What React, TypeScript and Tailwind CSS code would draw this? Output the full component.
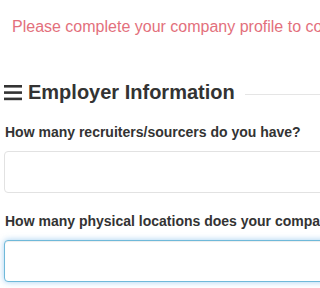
import React from "react";

export default function App() {
  return (
    <div className="w-full h-[288px] overflow-hidden bg-white" style={{ fontFamily: '"Liberation Sans", Arial, sans-serif' }}>
      <div className="w-[520px]">
        <div className="pt-[15px] pl-[12px] text-[16px] leading-[24px] text-[#e3707c] whitespace-nowrap">
          Please complete your company profile to continue.
        </div>
        <div className="mt-[39px] pl-[4px] flex items-center h-[28px]">
          <svg width="18" height="16" viewBox="0 0 18 16" className="shrink-0 mt-[1px]">
            <rect x="0" y="0" width="18" height="2.6" fill="#333" />
            <rect x="0" y="6.3" width="18" height="2.6" fill="#333" />
            <rect x="0" y="12.6" width="18" height="2.6" fill="#333" />
          </svg>
          <span className="ml-[6px] text-[20px] leading-[28px] font-bold text-[#333] whitespace-nowrap">Employer Information</span>
          <div className="flex-1 h-px bg-[#e5e5e5] ml-[10px] mt-[4px]" />
        </div>
        <div className="mt-[16px] pl-[4px] pr-0">
          <div className="pl-px text-[14px] leading-[20px] font-bold text-[#333] whitespace-nowrap">
            How many recruiters/sourcers do you have?
          </div>
          <div className="mt-[9px] h-[42px] w-[500px] rounded-[4px] border border-[#e2e2e2] bg-white" />
          <div className="mt-[18px] pl-px text-[14px] leading-[20px] font-bold text-[#333] whitespace-nowrap">
            How many physical locations does your company have?
          </div>
          <div className="mt-[9px] h-[42px] w-[500px] rounded-[4px] border border-[#6fb9d9] bg-white shadow-[inset_0_1px_1px_rgba(0,0,0,0.075),0_0_6px_rgba(102,175,233,0.6)]" />
        </div>
      </div>
    </div>
  );
}
